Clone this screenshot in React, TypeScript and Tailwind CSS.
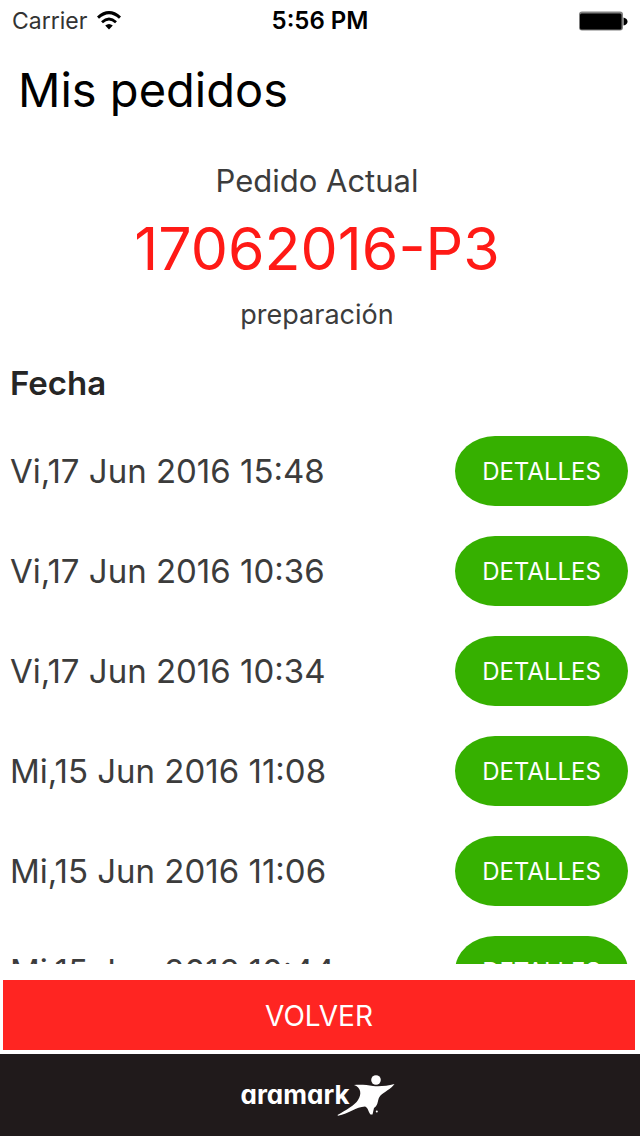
interface Order {
  id: number;
  date: string;
}

const ORDERS: Order[] = [
  { id: 1, date: "Vi,17 Jun 2016 15:48" },
  { id: 2, date: "Vi,17 Jun 2016 10:36" },
  { id: 3, date: "Vi,17 Jun 2016 10:34" },
  { id: 4, date: "Mi,15 Jun 2016 11:08" },
  { id: 5, date: "Mi,15 Jun 2016 11:06" },
  { id: 6, date: "Mi,15 Jun 2016 10:44" },
];

function WifiIcon() {
  return (
    <svg className="w-6 h-5" viewBox="0 0 24 20" fill="none" stroke="#000" aria-hidden="true">
      <path d="M1 6.6 Q12 -3.4 23 6.6" strokeWidth="3" />
      <path d="M5 11.2 Q12 4.8 19 11.2" strokeWidth="2.8" />
      <path d="M12 18.6 L8.2 14.6 Q12 11.2 15.8 14.6 Z" fill="#000" stroke="none" />
    </svg>
  );
}

function BatteryIcon() {
  return (
    <svg className="w-[50px] h-5" viewBox="0 0 50 20" aria-hidden="true">
      <rect x="1" y="0.5" width="44" height="19" rx="3" fill="#808080" />
      <rect x="2" y="2.5" width="41.5" height="16" rx="1.5" fill="#000" />
      <path d="M45.5 6.5 Q49.5 7.5 49.5 10.5 Q49.5 13.5 45.5 14.5 Z" fill="#000" />
    </svg>
  );
}

function StatusBar() {
  return (
    <div className="grid grid-cols-3 items-center h-[42px] px-3 text-2xl text-black">
      <div className="flex items-center gap-2.5">
        <span className="text-[23px] text-[#333]">Carrier</span>
        <WifiIcon />
      </div>
      <span className="text-center font-semibold">5:56 PM</span>
      <div className="flex justify-end">
        <BatteryIcon />
      </div>
    </div>
  );
}

function OrderRow({ order }: { order: Order }) {
  return (
    <li className="flex items-center justify-between h-[100px] shrink-0">
      <span className="pt-0.5 text-[33px] text-[#3c3c3c]">{order.date}</span>
      <button
        type="button"
        className="w-[173px] h-[70px] pt-0.5 rounded-[40px/35px] bg-[#36b000] text-2xl text-white"
      >
        DETALLES
      </button>
    </li>
  );
}

function Logo() {
  return (
    <div className="flex items-center text-white">
      <span className="text-[26px] font-bold leading-10 [font-feature-settings:'cv11']">aramark</span>
      <svg className="w-[58px] h-[42px] -ml-3" viewBox="0 0 58 42" fill="currentColor" aria-hidden="true">
        <circle cx="39" cy="6" r="4.8" />
        <path d="M17 11 C24 10.5 30 11 36 12 C43 12.5 50 12 57.5 10 C54 15 47 18 43.5 21.5 C40 25 42 31 37 34 L35.5 40.5 L33.5 40.5 C31 37 31 33.5 28 32.5 C19 33 12 39.5 1 41.8 L0.5 41 C9 36 18 31 21 26 C25 20 24 13.5 17 11 Z" />
        <circle cx="39.8" cy="37.5" r="1" />
      </svg>
    </div>
  );
}

export default function App() {
  return (
    <div className="flex flex-col h-screen overflow-hidden bg-white font-['Inter',sans-serif]">
      <StatusBar />

      <h1 className="px-[18px] pt-3 text-[47px] leading-[72px] text-black">Mis pedidos</h1>

      {/* Current order */}
      <section className="flex flex-col items-center pt-8 pr-1.5 text-[#3c3c3c]">
        <h2 className="text-[31px] leading-[46px]">Pedido Actual</h2>
        <p className="text-[59px] leading-[90px] text-[#ff1a16]">17062016-P3</p>
        <p className="text-[27px] leading-[42px]">preparación</p>
      </section>

      {/* Past orders */}
      <section className="flex flex-col flex-1 min-h-0 pl-2.5 pr-3 pt-6 overflow-hidden">
        <h2 className="text-[33px] leading-[46px] font-semibold text-[#262626]">Fecha</h2>
        <ul className="flex flex-col pt-[15px]">
          {ORDERS.map((order) => (
            <OrderRow key={order.id} order={order} />
          ))}
        </ul>
      </section>

      <div className="pt-4 pb-1 pl-[3px] pr-[5px]">
        <button type="button" className="w-full h-[70px] pt-0.5 bg-[#ff2522] text-[28px] text-white">
          VOLVER
        </button>
      </div>

      <footer className="flex items-center justify-center h-[82px] pr-1 shrink-0 bg-[#201a1b]">
        <Logo />
      </footer>
    </div>
  );
}
